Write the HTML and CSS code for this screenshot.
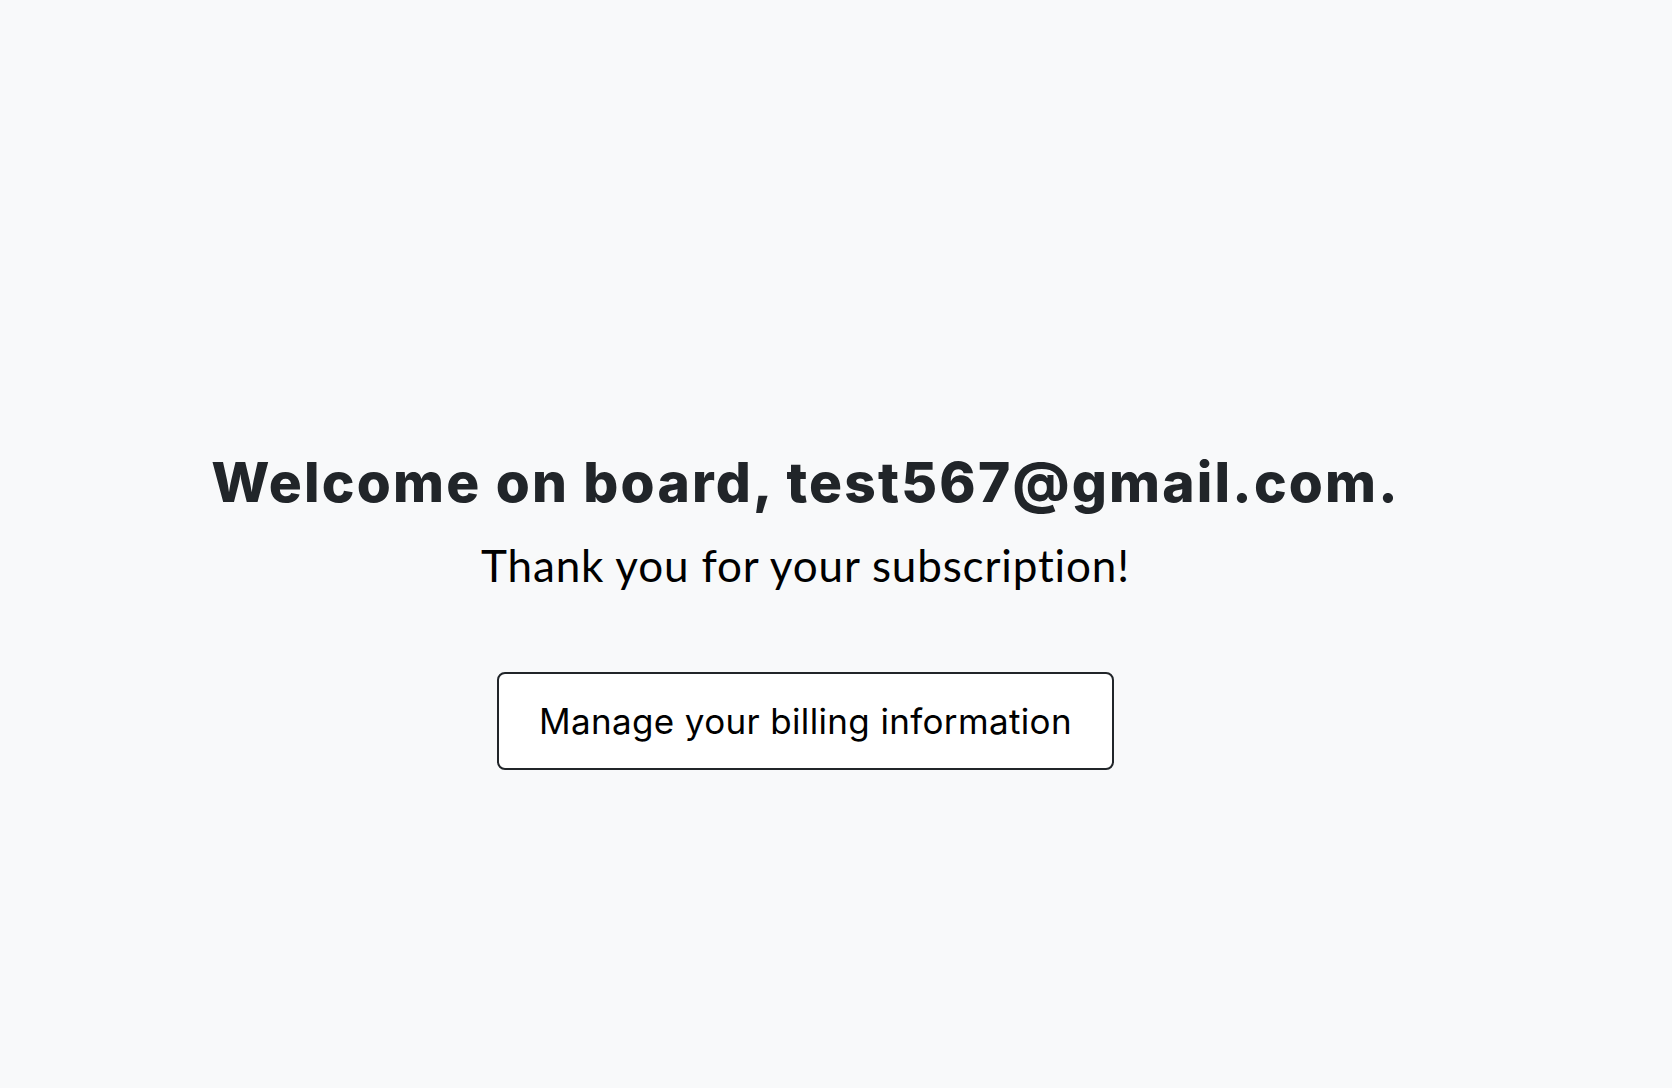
FILE: index.html
```html
<!DOCTYPE html>
<html lang="en">
<head>
<meta charset="utf-8">
<title>Welcome</title>
<link rel="stylesheet" href="styles.css">
</head>
<body>
<main class="page">
  <h1 class="title">Welcome on board, test567@gmail.com.</h1>
  <p class="subtitle">Thank you for your subscription!</p>
  <button class="billing-btn" type="button">Manage your billing information</button>
</main>
</body>
</html>
```
FILE: styles.css
```css
html, body {
  margin: 0;
  padding: 0;
  background: #f8f9fa;
}

.page {
  min-height: 100vh;
  box-sizing: border-box;
  display: flex;
  flex-direction: column;
  align-items: center;
  padding: 449px 61px 0 0;
}

.title {
  margin: 0;
  font-family: "Inter", "Liberation Sans", sans-serif;
  font-weight: 800;
  font-size: 55px;
  line-height: 66px;
  letter-spacing: 2.2px;
  color: #212529;
  white-space: nowrap;
}

.subtitle {
  margin: 23px 0 0;
  font-family: "Lato", "Open Sans", sans-serif;
  font-weight: 400;
  font-size: 44px;
  line-height: 54px;
  letter-spacing: 0.85px;
  font-variant-ligatures: none;
  color: #000;
  white-space: nowrap;
}

.billing-btn {
  margin-top: 80px;
  width: 617px;
  height: 98px;
  box-sizing: border-box;
  background: #fff;
  border: 2px solid #212529;
  border-radius: 8px;
  font-family: "Inter", "Roboto", sans-serif;
  font-size: 35px;
  font-weight: 400;
  letter-spacing: 0.35px;
  color: #000;
  padding: 0;
  cursor: pointer;
}
```
